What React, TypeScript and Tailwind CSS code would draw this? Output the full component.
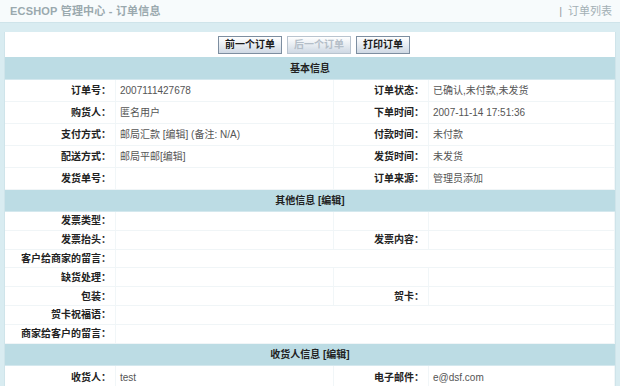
import React from 'react';

const font = { fontFamily: '"Liberation Sans", "Noto Sans CJK SC", sans-serif' };

type Cell = { label: string; value?: React.ReactNode };

const Label: React.FC<{ text: string }> = ({ text }) => (
  <div className="flex items-center justify-end pr-[4px] font-bold text-[#222] border-r border-[#f1f6f8]">{text}</div>
);

const Value: React.FC<{ children?: React.ReactNode; span?: boolean }> = ({ children, span }) => (
  <div className={`flex items-center pl-[4px] text-[#555] border-r border-[#f1f6f8] ${span ? 'col-span-3' : ''}`}>{children}</div>
);

const Row: React.FC<{ cells: Cell[]; h: string }> = ({ cells, h }) => (
  <div className={`grid grid-cols-[111px_218px_95px_1fr] border-b border-[#f0f5f7] ${h}`}>
    {cells.map((c, i) => (
      <React.Fragment key={i}>
        <Label text={c.label} />
        <Value span={cells.length === 1}>{c.value}</Value>
      </React.Fragment>
    ))}
  </div>
);

const SectionHead: React.FC<{ title: string; h: string }> = ({ title, h }) => (
  <div className={`flex items-center justify-center bg-[#bcdce4] font-bold text-[#222] border-b border-[#d4e8ee] ${h}`}>{title}</div>
);

const Btn: React.FC<{ text: string; disabled?: boolean; w: string }> = ({ text, disabled, w }) => (
  <button
    className={`h-[18px] ${w} border border-[#7d8ea0] bg-gradient-to-b from-[#ffffff] to-[#cfd9e4] text-[10px] font-bold ${
      disabled ? 'text-[#b4bec8] border-[#b9c4cf]' : 'text-[#1b1b1b]'
    }`}
  >
    {text}
  </button>
);

export default function App() {
  return (
    <div className="w-[620px] h-[386px] overflow-hidden bg-[#d9ecf1] text-[10px]" style={font}>
      <div className="h-[23px] bg-[#f7fbfc] border-b border-[#cfe4ea] flex items-center justify-between pl-[10px] pr-[8px]">
        <span className="text-[11px] font-bold text-[#9aa9ae] tracking-[0.2px]">ECSHOP 管理中心 - 订单信息</span>
        <span className="text-[11px] text-[#a3b0b5] flex items-center gap-[6px]">
          <span className="text-[#8d9a9f]">|</span>
          订单列表
        </span>
      </div>
      <div className="h-[9px]" />
      <div className="mx-[4px] bg-white border-x border-[#cfe4ea]">
        <div className="h-[25px] flex items-center justify-center gap-[5px] pl-[8px]">
          <Btn text="前一个订单" w="w-[64px]" />
          <Btn text="后一个订单" w="w-[64px]" disabled />
          <Btn text="打印订单" w="w-[54px]" />
        </div>
        <SectionHead title="基本信息" h="h-[23px]" />
        <Row h="h-[22px]" cells={[{ label: '订单号：', value: '2007111427678' }, { label: '订单状态：', value: '已确认,未付款,未发货' }]} />
        <Row h="h-[22px]" cells={[{ label: '购货人：', value: '匿名用户' }, { label: '下单时间：', value: '2007-11-14 17:51:36' }]} />
        <Row h="h-[22px]" cells={[{ label: '支付方式：', value: '邮局汇款 [编辑] (备注: N/A)' }, { label: '付款时间：', value: '未付款' }]} />
        <Row h="h-[22px]" cells={[{ label: '配送方式：', value: '邮局平邮[编辑]' }, { label: '发货时间：', value: '未发货' }]} />
        <Row h="h-[22px]" cells={[{ label: '发货单号：' }, { label: '订单来源：', value: '管理员添加' }]} />
        <SectionHead title="其他信息 [编辑]" h="h-[22px]" />
        <Row h="h-[18.8px]" cells={[{ label: '发票类型：' }, { label: '' }]} />
        <Row h="h-[18.8px]" cells={[{ label: '发票抬头：' }, { label: '发票内容：' }]} />
        <Row h="h-[18.8px]" cells={[{ label: '客户给商家的留言：' }]} />
        <Row h="h-[18.8px]" cells={[{ label: '缺货处理：' }, { label: '' }]} />
        <Row h="h-[18.8px]" cells={[{ label: '包装：' }, { label: '贺卡：' }]} />
        <Row h="h-[18.8px]" cells={[{ label: '贺卡祝福语：' }]} />
        <Row h="h-[18.8px]" cells={[{ label: '商家给客户的留言：' }]} />
        <SectionHead title="收货人信息 [编辑]" h="h-[22px]" />
        <Row h="h-[24px]" cells={[{ label: '收货人：', value: 'test' }, { label: '电子邮件：', value: 'e@dsf.com' }]} />
      </div>
    </div>
  );
}
